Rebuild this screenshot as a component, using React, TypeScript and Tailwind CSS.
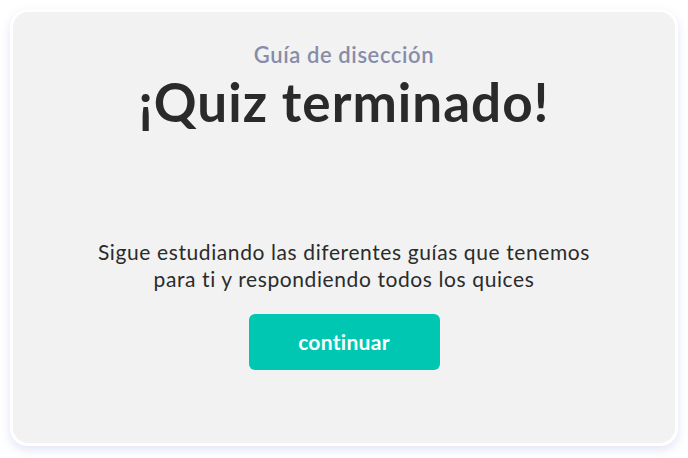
const App = () => (
  <div className="w-[688px] h-[458px] bg-white p-[9px_10px_12px_10px] font-['Lato',sans-serif]">
    <div className="h-[437px] rounded-[18px] border-[3px] border-white bg-[#f2f2f2] shadow-[0_4px_10px_rgba(140,150,220,0.25)] flex flex-col items-center">
      <p className="mt-[29px] text-[22px] leading-[28px] font-semibold text-[#878ca9] tracking-[0.6px]">Guía de disección</p>
      <h1 className="mt-[4px] text-[53px] leading-[58px] font-bold text-[#2a2a2a] tracking-[1px]">¡Quiz terminado!</h1>

      <p className="mt-[107px] text-center text-[21px] leading-[27px] text-[#2b2b2b] tracking-[0.6px]">
        Sigue estudiando las diferentes guías que tenemos
        <br />
        para ti y respondiendo todos los quices
      </p>

      <button className="mt-[22px] w-[191px] h-[56px] rounded-[6px] bg-[#00c7b1] text-white text-[21px] font-bold tracking-[0.3px]">
        continuar
      </button>
    </div>
  </div>
);

export default App;
